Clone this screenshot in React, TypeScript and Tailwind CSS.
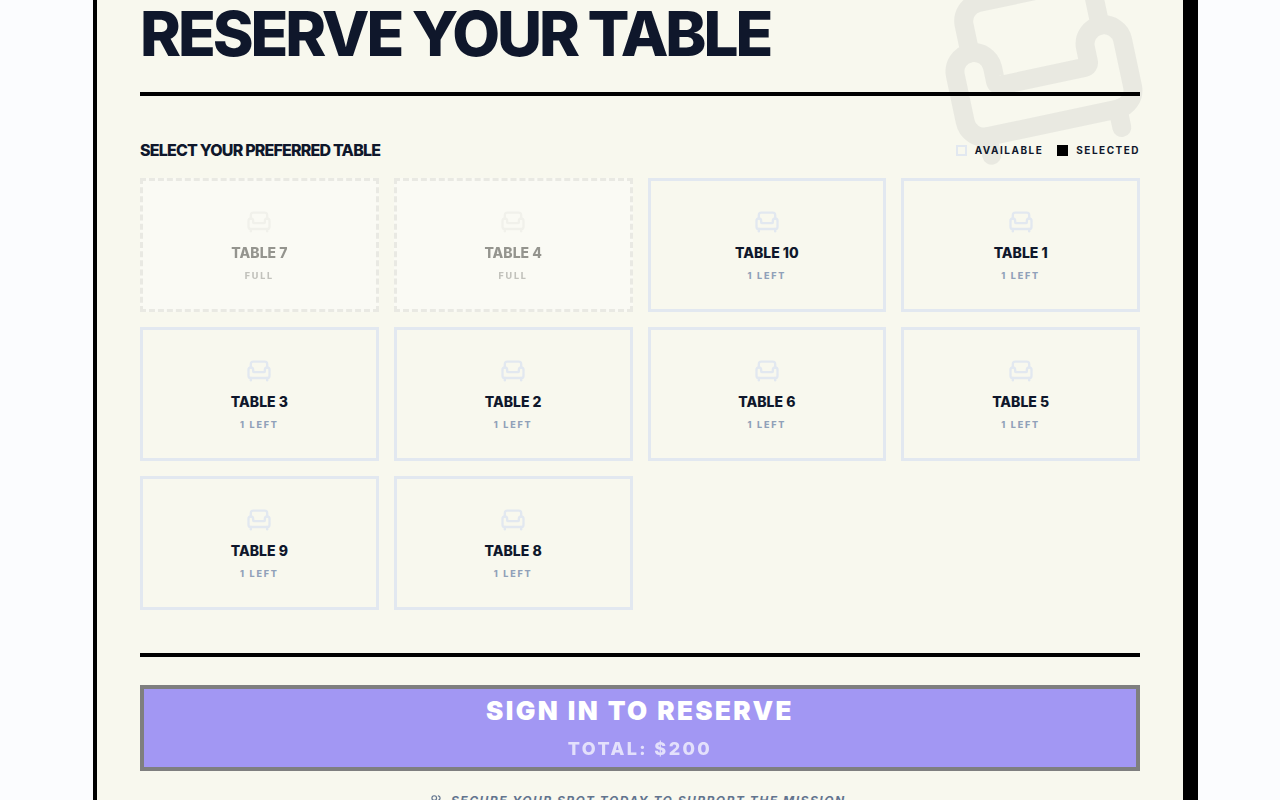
import { Armchair, Users } from "lucide-react";

type Table = {
  id: number;
  seatsLeft: number;
};

const TABLES: Table[] = [
  { id: 7, seatsLeft: 0 },
  { id: 4, seatsLeft: 0 },
  { id: 10, seatsLeft: 1 },
  { id: 1, seatsLeft: 1 },
  { id: 3, seatsLeft: 1 },
  { id: 2, seatsLeft: 1 },
  { id: 6, seatsLeft: 1 },
  { id: 5, seatsLeft: 1 },
  { id: 9, seatsLeft: 1 },
  { id: 8, seatsLeft: 1 },
];

function TableCard({ table }: { table: Table }) {
  const full = table.seatsLeft === 0;

  return (
    <button
      type="button"
      disabled={full}
      className={`flex flex-col items-center border-3 pt-[27px] pb-[25px] uppercase ${
        full
          ? "border-dashed border-slate-300 bg-white text-black opacity-40 grayscale"
          : "border-slate-200 text-slate-900"
      }`}
    >
      <Armchair size={28} className="text-slate-200" />
      <span className="mt-1.5 text-sm leading-[22px] font-extrabold">Table {table.id}</span>
      <span
        className={`mt-1 text-[9px] leading-4 font-extrabold tracking-[0.2em] ${
          full ? "text-slate-500" : "text-slate-400"
        }`}
      >
        {full ? "Full" : `${table.seatsLeft} left`}
      </span>
    </button>
  );
}

function Legend() {
  return (
    <div className="flex items-center gap-[14px] text-[10px] leading-4 font-bold tracking-[0.15em] uppercase">
      <span className="flex items-center gap-2">
        <span className="size-[11px] border-2 border-slate-200" />
        Available
      </span>
      <span className="flex items-center gap-2">
        <span className="size-[11px] bg-black" />
        Selected
      </span>
    </div>
  );
}

export default function App() {
  return (
    <div className="h-screen overflow-hidden bg-[#fbfcfe] px-6 font-['Inter',sans-serif] text-slate-900">
      <main className="relative mx-auto min-h-full max-w-[1094px] border-x-4 border-black bg-[#f8f8ee] px-[43px] pb-12 shadow-[11px_0_0_0_#000]">
        <Armchair
          size={228}
          aria-hidden="true"
          className="absolute -top-[47px] right-7 -rotate-12 text-slate-900 opacity-6"
        />

        <header className="relative border-b-4 border-black pb-[25px]">
          <h1 className="text-[62px] leading-[67px] font-extrabold tracking-tighter uppercase">
            Reserve your table
          </h1>
        </header>

        <section className="relative pt-[42px]">
          <div className="mb-4 flex items-center justify-between">
            <h2 className="text-base leading-6 font-extrabold tracking-tighter uppercase">
              Select your preferred table
            </h2>
            <Legend />
          </div>
          <div className="grid grid-cols-4 gap-[15px]">
            {TABLES.map((table) => (
              <TableCard key={table.id} table={table} />
            ))}
          </div>
        </section>

        <footer className="relative mt-[43px] border-t-4 border-black pt-7">
          <button
            type="button"
            disabled
            className="flex w-full flex-col items-center border-4 border-[#7f7f7f] bg-[#a297f3] py-1 font-extrabold tracking-[0.15em] text-white uppercase"
          >
            <span className="text-[26px] leading-9 font-black">Sign in to reserve</span>
            <span className="mt-1.5 text-lg leading-7 opacity-70">Total: $200</span>
          </button>
          <p className="mt-5 flex items-center justify-center gap-2 text-xs leading-5 font-bold tracking-[0.125em] text-slate-500 uppercase italic">
            <Users size={14} />
            Secure your spot today to support the mission.
          </p>
        </footer>
      </main>
    </div>
  );
}
